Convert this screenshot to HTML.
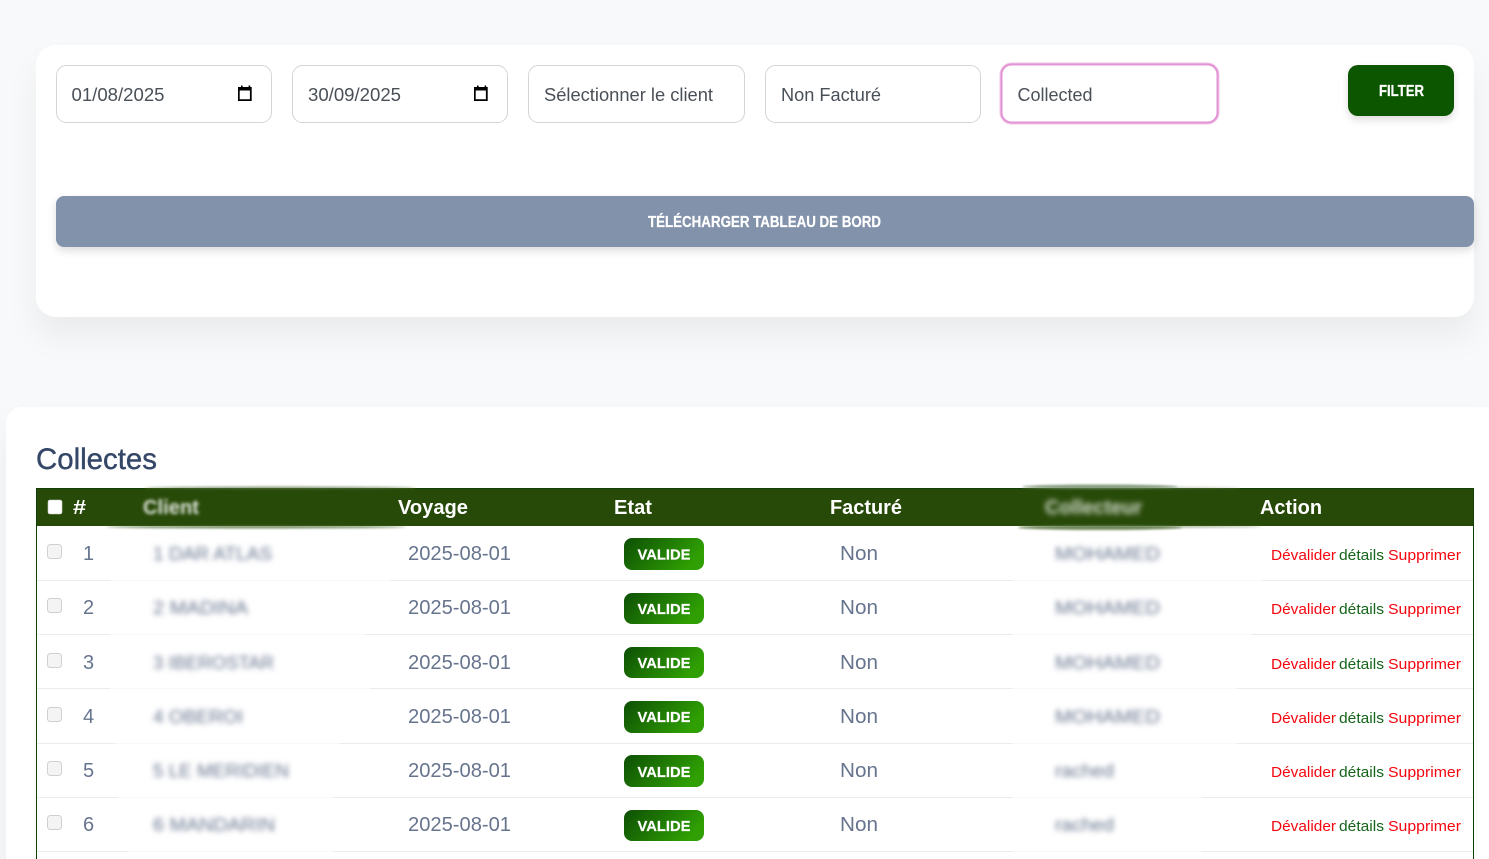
<!DOCTYPE html>
<html lang="fr">
<head>
<meta charset="utf-8">
<title>Collectes</title>
<style>
html,body{margin:0;padding:0;width:1489px;height:859px;overflow:hidden;background:#f8f9fa}
svg{display:block;position:absolute;left:0;top:0}
text{font-family:"Liberation Sans",sans-serif;white-space:pre}
.inp{font-size:18px;fill:#495057}
.th{font-size:20px;font-weight:700;fill:#fff}
.td{font-size:20px;fill:#67748e}
.bl{font-size:18.5px;fill:#67748e;filter:url(#b)}
.bd{font-size:15px;font-weight:700;fill:#fff;stroke:#fff;stroke-width:.2}
.ac{font-size:14.5px}
.r{fill:#f5060f}
.g{fill:#14641a}
.cb{fill:#f4f4f4;stroke:#cfd0d1;stroke-width:1}
.ln{fill:#e9ecef}
.ls{fill:#f7f8f9}
</style>
</head>
<body>
<svg width="1489" height="859" viewBox="0 0 1489 859" xmlns="http://www.w3.org/2000/svg">
<defs>
<filter id="b" x="-20%" y="-80%" width="140%" height="260%"><feGaussianBlur stdDeviation="2.7"/></filter>
<filter id="b2" x="-10%" y="-30%" width="120%" height="160%"><feGaussianBlur stdDeviation="1.7"/></filter>
<filter id="b3" x="-10%" y="-200%" width="120%" height="500%"><feGaussianBlur stdDeviation="1"/></filter>
<filter id="cs" x="-5%" y="-20%" width="110%" height="150%"><feDropShadow dx="0" dy="20" stdDeviation="14" flood-color="#000" flood-opacity=".05"/></filter>
<filter id="bs" x="-5%" y="-30%" width="110%" height="180%"><feDropShadow dx="0" dy="4" stdDeviation="4" flood-color="#000" flood-opacity=".13"/></filter>
<linearGradient id="vg" x1="0" y1="0" x2="1" y2=".35"><stop offset="0" stop-color="#0d4f05"/><stop offset="1" stop-color="#2f9f03"/></linearGradient>
<path id="cal" fill-rule="evenodd" d="M241 85.5h1.6V87h6V85.5h1.6V87h1.5v14H238V87h3zM239.7 90.5V99.2h10.2V90.5z" fill="#000"/>
</defs>

<rect width="1489" height="859" fill="#f8f9fa"/>

<!-- Filter card -->
<rect x="36" y="45" width="1438" height="272" rx="20" fill="#fff" filter="url(#cs)"/>

<rect x="56.5" y="65.5" width="215" height="57" rx="10" fill="#fff" stroke="#d2d6da"/>
<text class="inp" x="71.5" y="101" textLength="93" lengthAdjust="spacingAndGlyphs">01/08/2025</text>
<use href="#cal"/>

<rect x="292.5" y="65.5" width="215" height="57" rx="10" fill="#fff" stroke="#d2d6da"/>
<text class="inp" x="308" y="101" textLength="93" lengthAdjust="spacingAndGlyphs">30/09/2025</text>
<use href="#cal" x="236"/>

<rect x="528.5" y="65.5" width="216" height="57" rx="10" fill="#fff" stroke="#d2d6da"/>
<text class="inp" x="544" y="101" textLength="169" lengthAdjust="spacingAndGlyphs">Sélectionner le client</text>

<rect x="765.5" y="65.5" width="215" height="57" rx="10" fill="#fff" stroke="#d2d6da"/>
<text class="inp" x="781" y="101" textLength="100" lengthAdjust="spacingAndGlyphs">Non Facturé</text>

<rect x="999.5" y="62.5" width="220" height="62" rx="12" fill="#f0c4e6"/>
<rect x="1001.5" y="64.5" width="216" height="58" rx="10" fill="#fff" stroke="#e294d5" stroke-width="2"/>
<text class="inp" x="1017.5" y="101" textLength="75" lengthAdjust="spacingAndGlyphs">Collected</text>

<rect x="1348" y="65" width="106" height="51" rx="10" fill="#115606" filter="url(#bs)"/>
<text x="1379" y="96" font-size="15.5" font-weight="700" fill="#fff" stroke="#fff" stroke-width=".25" textLength="45" lengthAdjust="spacingAndGlyphs">FILTER</text>

<rect x="56" y="196" width="1418" height="51" rx="8" fill="#8392ab" filter="url(#bs)"/>
<text x="648" y="227" font-size="15.5" font-weight="700" fill="#fff" stroke="#fff" stroke-width=".25" textLength="233" lengthAdjust="spacingAndGlyphs">TÉLÉCHARGER TABLEAU DE BORD</text>

<!-- Table card -->
<rect x="6" y="407" width="1500" height="520" rx="16" fill="#fff" filter="url(#cs)"/>
<text x="36" y="469" font-size="30" fill="#344767" stroke="#344767" stroke-width=".4" textLength="121" lengthAdjust="spacingAndGlyphs">Collectes</text>

<!-- Table frame -->
<rect x="36" y="488" width="1438" height="38" fill="#284a09"/>
<rect x="36" y="488" width="1438" height="1" fill="#0f4006"/>
<rect x="36" y="488" width="1" height="371" fill="#0f4006"/>
<rect x="1473" y="488" width="1" height="371" fill="#0f4006"/>

<!-- blurred header smears -->
<rect x="145" y="488" width="270" height="1" fill="#284a09"/>
<ellipse cx="280" cy="487.8" rx="136" ry="1.3" fill="#5b7446" opacity=".7" filter="url(#b3)"/>
<ellipse cx="256" cy="527" rx="150" ry="1.4" fill="#4b6a33" opacity=".8" filter="url(#b3)"/>
<rect x="1022" y="488" width="218" height="1" fill="#284a09"/>
<ellipse cx="1100" cy="486.8" rx="78" ry="2.3" fill="#64805a" opacity=".75" filter="url(#b3)"/>
<ellipse cx="1135" cy="487.8" rx="105" ry="1" fill="#7b9270" opacity=".45" filter="url(#b3)"/>
<ellipse cx="1100" cy="527.6" rx="82" ry="2.4" fill="#56733e" opacity=".8" filter="url(#b3)"/>
<ellipse cx="1140" cy="526.7" rx="122" ry="1" fill="#56733e" opacity=".6" filter="url(#b3)"/>

<!-- Header -->
<rect x="48" y="500" width="14" height="14" rx="2" fill="#fff" stroke="#c9c9c9" stroke-width=".6"/>
<text class="th" x="73" y="514" textLength="13" lengthAdjust="spacingAndGlyphs">#</text>
<text class="th" x="143" y="514" textLength="56" lengthAdjust="spacingAndGlyphs" filter="url(#b2)" opacity=".85">Client</text>
<text class="th" x="398" y="514" textLength="70" lengthAdjust="spacingAndGlyphs">Voyage</text>
<text class="th" x="614" y="514" textLength="38" lengthAdjust="spacingAndGlyphs">Etat</text>
<text class="th" x="830" y="514" textLength="72" lengthAdjust="spacingAndGlyphs">Facturé</text>
<text class="th" x="1045" y="514" textLength="97" lengthAdjust="spacingAndGlyphs" filter="url(#b)" opacity=".8">Collecteur</text>
<text class="th" x="1260" y="514" textLength="62" lengthAdjust="spacingAndGlyphs">Action</text>

<!-- Row lines -->
<g>
<rect class="ln" x="37" y="580" width="1436" height="1"/><rect class="ls" x="110" y="580" width="280" height="1"/><rect class="ls" x="1012" y="580" width="250" height="1"/>
<rect class="ln" x="37" y="634" width="1436" height="1"/><rect class="ls" x="110" y="634" width="255" height="1"/><rect class="ls" x="1012" y="634" width="240" height="1"/>
<rect class="ln" x="37" y="688" width="1436" height="1"/><rect class="ls" x="110" y="688" width="260" height="1"/><rect class="ls" x="1012" y="688" width="225" height="1"/>
<rect class="ln" x="37" y="743" width="1436" height="1"/><rect class="ls" x="115" y="743" width="225" height="1"/><rect class="ls" x="1012" y="743" width="225" height="1"/>
<rect class="ln" x="37" y="797" width="1436" height="1"/><rect class="ls" x="118" y="797" width="215" height="1"/><rect class="ls" x="1012" y="797" width="190" height="1"/>
<rect class="ln" x="37" y="851" width="1436" height="1"/><rect class="ls" x="128" y="851" width="205" height="1"/><rect class="ls" x="1012" y="851" width="190" height="1"/>
</g>

<!-- Row 1 -->
<rect class="cb" x="47.5" y="544.5" width="14" height="14" rx="3"/>
<text class="td" x="83" y="560">1</text>
<text class="bl" x="153" y="560" textLength="119" lengthAdjust="spacingAndGlyphs">1 DAR ATLAS</text>
<text class="td" x="408" y="560" textLength="103" lengthAdjust="spacingAndGlyphs">2025-08-01</text>
<rect x="624" y="538" width="80" height="32" rx="8" fill="url(#vg)"/>
<text class="bd" x="637.5" y="559.5" textLength="53" lengthAdjust="spacingAndGlyphs">VALIDE</text>
<text class="td" x="840" y="560" textLength="38" lengthAdjust="spacingAndGlyphs">Non</text>
<text class="bl" x="1055" y="560" textLength="105" lengthAdjust="spacingAndGlyphs">MOHAMED</text>
<text class="ac r" x="1271" y="560" textLength="65" lengthAdjust="spacingAndGlyphs">Dévalider</text>
<text class="ac g" x="1339" y="560" textLength="45" lengthAdjust="spacingAndGlyphs">détails</text>
<text class="ac r" x="1388" y="560" textLength="73" lengthAdjust="spacingAndGlyphs">Supprimer</text>

<!-- Row 2 -->
<rect class="cb" x="47.5" y="598.5" width="14" height="14" rx="3"/>
<text class="td" x="83" y="614">2</text>
<text class="bl" x="153" y="614" textLength="95" lengthAdjust="spacingAndGlyphs">2 MADINA</text>
<text class="td" x="408" y="614" textLength="103" lengthAdjust="spacingAndGlyphs">2025-08-01</text>
<rect x="624" y="593" width="80" height="31" rx="8" fill="url(#vg)"/>
<text class="bd" x="637.5" y="614" textLength="53" lengthAdjust="spacingAndGlyphs">VALIDE</text>
<text class="td" x="840" y="614" textLength="38" lengthAdjust="spacingAndGlyphs">Non</text>
<text class="bl" x="1055" y="614" textLength="105" lengthAdjust="spacingAndGlyphs">MOHAMED</text>
<text class="ac r" x="1271" y="614" textLength="65" lengthAdjust="spacingAndGlyphs">Dévalider</text>
<text class="ac g" x="1339" y="614" textLength="45" lengthAdjust="spacingAndGlyphs">détails</text>
<text class="ac r" x="1388" y="614" textLength="73" lengthAdjust="spacingAndGlyphs">Supprimer</text>

<!-- Row 3 -->
<rect class="cb" x="47.5" y="653.5" width="14" height="14" rx="3"/>
<text class="td" x="83" y="669">3</text>
<text class="bl" x="153" y="669" textLength="121" lengthAdjust="spacingAndGlyphs">3 IBEROSTAR</text>
<text class="td" x="408" y="669" textLength="103" lengthAdjust="spacingAndGlyphs">2025-08-01</text>
<rect x="624" y="647" width="80" height="31" rx="8" fill="url(#vg)"/>
<text class="bd" x="637.5" y="668" textLength="53" lengthAdjust="spacingAndGlyphs">VALIDE</text>
<text class="td" x="840" y="669" textLength="38" lengthAdjust="spacingAndGlyphs">Non</text>
<text class="bl" x="1055" y="669" textLength="105" lengthAdjust="spacingAndGlyphs">MOHAMED</text>
<text class="ac r" x="1271" y="669" textLength="65" lengthAdjust="spacingAndGlyphs">Dévalider</text>
<text class="ac g" x="1339" y="669" textLength="45" lengthAdjust="spacingAndGlyphs">détails</text>
<text class="ac r" x="1388" y="669" textLength="73" lengthAdjust="spacingAndGlyphs">Supprimer</text>

<!-- Row 4 -->
<rect class="cb" x="47.5" y="707.5" width="14" height="14" rx="3"/>
<text class="td" x="83" y="723">4</text>
<text class="bl" x="153" y="723" textLength="90" lengthAdjust="spacingAndGlyphs">4 OBEROI</text>
<text class="td" x="408" y="723" textLength="103" lengthAdjust="spacingAndGlyphs">2025-08-01</text>
<rect x="624" y="701" width="80" height="32" rx="8" fill="url(#vg)"/>
<text class="bd" x="637.5" y="722" textLength="53" lengthAdjust="spacingAndGlyphs">VALIDE</text>
<text class="td" x="840" y="723" textLength="38" lengthAdjust="spacingAndGlyphs">Non</text>
<text class="bl" x="1055" y="723" textLength="105" lengthAdjust="spacingAndGlyphs">MOHAMED</text>
<text class="ac r" x="1271" y="723" textLength="65" lengthAdjust="spacingAndGlyphs">Dévalider</text>
<text class="ac g" x="1339" y="723" textLength="45" lengthAdjust="spacingAndGlyphs">détails</text>
<text class="ac r" x="1388" y="723" textLength="73" lengthAdjust="spacingAndGlyphs">Supprimer</text>

<!-- Row 5 -->
<rect class="cb" x="47.5" y="761.5" width="14" height="14" rx="3"/>
<text class="td" x="83" y="777">5</text>
<text class="bl" x="153" y="777" textLength="136" lengthAdjust="spacingAndGlyphs">5 LE MERIDIEN</text>
<text class="td" x="408" y="777" textLength="103" lengthAdjust="spacingAndGlyphs">2025-08-01</text>
<rect x="624" y="755" width="80" height="32" rx="8" fill="url(#vg)"/>
<text class="bd" x="637.5" y="777" textLength="53" lengthAdjust="spacingAndGlyphs">VALIDE</text>
<text class="td" x="840" y="777" textLength="38" lengthAdjust="spacingAndGlyphs">Non</text>
<text class="bl" x="1055" y="777" textLength="59" lengthAdjust="spacingAndGlyphs">rached</text>
<text class="ac r" x="1271" y="777" textLength="65" lengthAdjust="spacingAndGlyphs">Dévalider</text>
<text class="ac g" x="1339" y="777" textLength="45" lengthAdjust="spacingAndGlyphs">détails</text>
<text class="ac r" x="1388" y="777" textLength="73" lengthAdjust="spacingAndGlyphs">Supprimer</text>

<!-- Row 6 -->
<rect class="cb" x="47.5" y="815.5" width="14" height="14" rx="3"/>
<text class="td" x="83" y="831">6</text>
<text class="bl" x="153" y="831" textLength="122" lengthAdjust="spacingAndGlyphs">6 MANDARIN</text>
<text class="td" x="408" y="831" textLength="103" lengthAdjust="spacingAndGlyphs">2025-08-01</text>
<rect x="624" y="810" width="80" height="31" rx="8" fill="url(#vg)"/>
<text class="bd" x="637.5" y="831" textLength="53" lengthAdjust="spacingAndGlyphs">VALIDE</text>
<text class="td" x="840" y="831" textLength="38" lengthAdjust="spacingAndGlyphs">Non</text>
<text class="bl" x="1055" y="831" textLength="59" lengthAdjust="spacingAndGlyphs">rached</text>
<text class="ac r" x="1271" y="831" textLength="65" lengthAdjust="spacingAndGlyphs">Dévalider</text>
<text class="ac g" x="1339" y="831" textLength="45" lengthAdjust="spacingAndGlyphs">détails</text>
<text class="ac r" x="1388" y="831" textLength="73" lengthAdjust="spacingAndGlyphs">Supprimer</text>
</svg>
</body>
</html>
